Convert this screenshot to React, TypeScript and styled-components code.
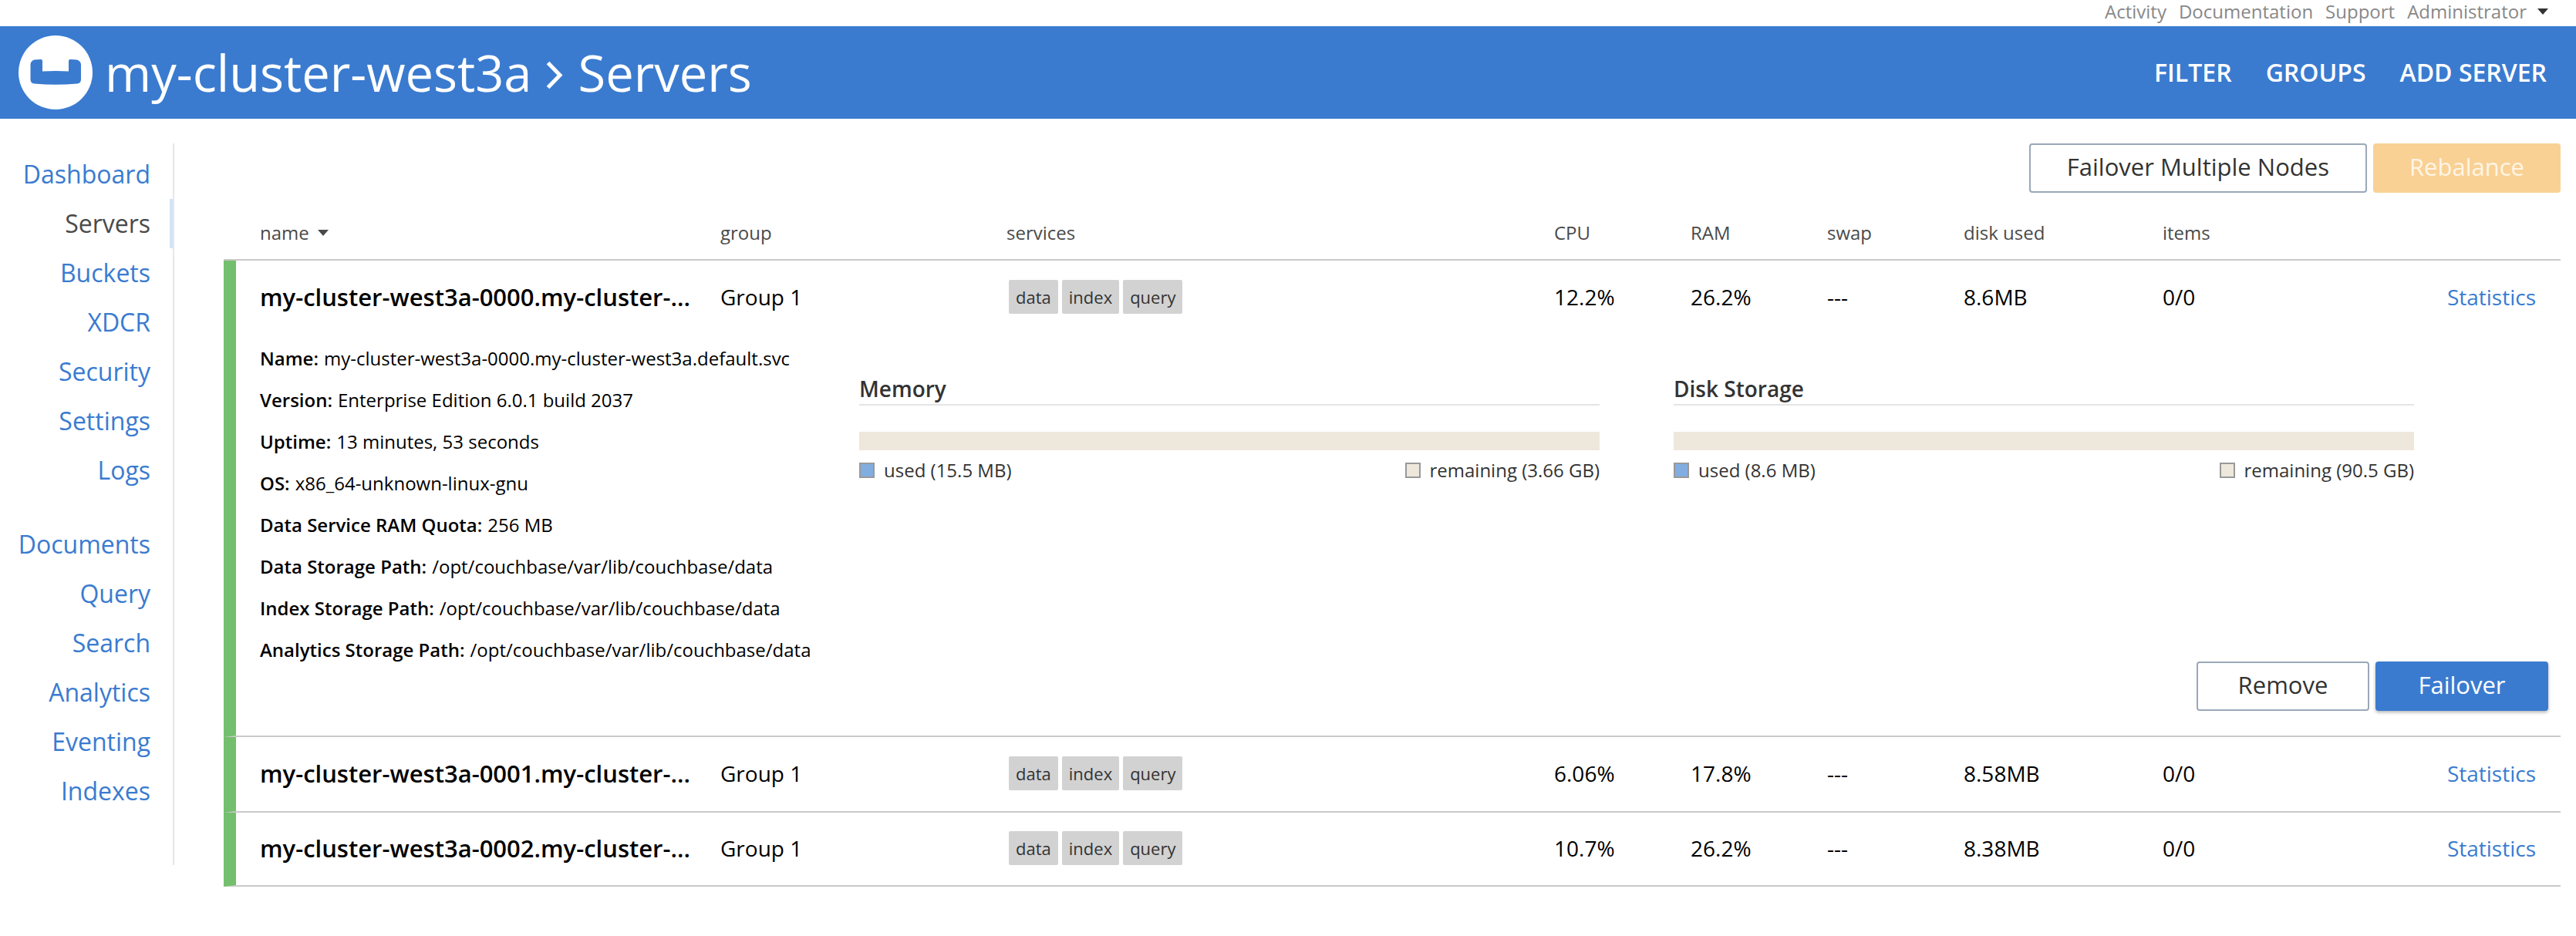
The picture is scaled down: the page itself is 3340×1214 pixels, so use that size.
import React from 'react';
import styled, { createGlobalStyle } from 'styled-components';

const blue = '#3a7bd0';

const GlobalStyle = createGlobalStyle`
  *, *::before, *::after { box-sizing: border-box; }
  body {
    margin: 0;
    background: #fff;
    color: #000;
    font-family: 'Open Sans', 'Noto Sans', sans-serif;
    font-size: 28px;
  }
  a { text-decoration: none; }
`;

const TopBar = styled.nav`
  display: flex;
  justify-content: flex-end;
  align-items: center;
  gap: 16px;
  height: 34px;
  padding: 0 36px 4px 0;
`;

const TopLink = styled.a`
  color: #888;
  font-size: 24px;
  line-height: 30px;
`;

const AccountButton = styled.button`
  display: flex;
  align-items: center;
  gap: 14px;
  padding: 0;
  border: 0;
  background: none;
  color: #888;
  font: inherit;
  font-size: 24px;
  line-height: 30px;
`;

const Caret = styled.span<{ $color: string }>`
  width: 0;
  height: 0;
  border: 7px solid transparent;
  border-top: 8px solid ${(p) => p.$color};
  border-bottom: 0;
`;

const Header = styled.header`
  display: flex;
  align-items: center;
  height: 120px;
  padding: 0 38px 0 24px;
  background: ${blue};
  color: #fff;
`;

const Logo = styled.svg`
  width: 96px;
  height: 96px;
  flex: none;
`;

const Title = styled.h1`
  display: flex;
  align-items: center;
  gap: 18px;
  margin: 0 auto 0 16px;
  font-size: 65px;
  font-weight: 400;
  line-height: 88px;
`;

const Chevron = styled.svg`
  width: 24px;
  height: 48px;
`;

const Actions = styled.div`
  display: flex;
  gap: 44px;
`;

const Action = styled.button`
  padding: 0;
  border: 0;
  background: none;
  color: #fff;
  font: inherit;
  font-size: 32px;
  font-weight: 600;
  line-height: 40px;
  text-transform: uppercase;
`;

const Body = styled.div`
  display: flex;
  align-items: flex-start;
  padding: 32px 20px 0 0;
`;

const Sidebar = styled.nav`
  display: flex;
  flex-direction: column;
  flex: none;
  gap: 32px;
  width: 226px;
  margin-right: 64px;
  padding: 8px 0 64px;
  border-right: 2px solid #e6e6e6;
`;

const NavGroup = styled.ul`
  margin: 0;
  padding: 0;
  list-style: none;
`;

const NavLink = styled.a<{ $active?: boolean }>`
  display: block;
  padding-right: ${(p) => (p.$active ? 25 : 29)}px;
  border-right: ${(p) => (p.$active ? '4px solid #d3e3f7' : '0')};
  color: ${(p) => (p.$active ? '#4a4a4a' : blue)};
  font-size: 32px;
  line-height: 64px;
  text-align: right;
`;

const Main = styled.main`
  flex: 1;
  min-width: 0;
`;

const ButtonRow = styled.div`
  display: flex;
  justify-content: flex-end;
  gap: 8px;
`;

const Button = styled.button<{ $kind: 'outline' | 'primary' | 'warning' }>`
  min-width: 224px;
  height: 64px;
  padding: 0 47px 4px;
  border: ${(p) => (p.$kind === 'outline' ? '2px solid #9aa8b8' : '0')};
  border-radius: 4px;
  background: ${(p) => ({ outline: '#fff', primary: blue, warning: '#f9d194' })[p.$kind]};
  box-shadow: ${(p) => (p.$kind === 'primary' ? '0 2px 4px rgba(0, 0, 0, 0.3)' : 'none')};
  color: ${(p) => ({ outline: '#333', primary: '#fff', warning: '#fff5e6' })[p.$kind]};
  font: inherit;
  font-size: 31px;
  line-height: 40px;
`;

const Table = styled.table`
  width: 100%;
  table-layout: fixed;
  border-collapse: separate;
  border-spacing: 0;
`;

const Col = styled.col<{ $width?: number }>`
  width: ${(p) => (p.$width ? `${p.$width}px` : 'auto')};
`;

const HeadCell = styled.th`
  height: 88px;
  padding: 17px 0 0;
  border-bottom: 2px solid #c9c9c9;
  color: #4a4a4a;
  font-size: 24px;
  font-weight: 400;
  line-height: 32px;
  text-align: left;

  &:first-child { padding-left: 47px; }
`;

const SortButton = styled.button`
  display: flex;
  align-items: center;
  gap: 11px;
  padding: 0;
  border: 0;
  background: none;
  color: inherit;
  font: inherit;
`;

const Cell = styled.td<{ $open?: boolean }>`
  height: ${(p) => (p.$open ? 96 : 98)}px;
  padding: 0 0 2px;
  border-bottom: ${(p) => (p.$open ? '0' : '2px solid #c9c9c9')};
  line-height: 40px;
  vertical-align: middle;

  tr:last-child > & { height: 96px; }
`;

const NameCell = styled(Cell)`
  padding-left: 31px;
  border-left: 16px solid #74bf6d;
  font-size: 31px;
  font-weight: 600;
  white-space: nowrap;
`;

const LinkCell = styled(Cell)`
  padding-right: 32px;
  text-align: right;
`;

const StatsLink = styled.a`
  color: ${blue};
`;

const Tags = styled.div`
  display: flex;
  gap: 5px;
  padding-left: 3px;
`;

const Tag = styled.span`
  padding: 0 9px;
  border-radius: 2px;
  background: #d2d2d2;
  color: #333;
  font-size: 22px;
  line-height: 44px;
`;

const DetailCell = styled.td`
  padding: 4px 16px 32px 31px;
  border-left: 16px solid #74bf6d;
  border-bottom: 2px solid #c9c9c9;
`;

const DetailTop = styled.div`
  display: grid;
  grid-template-columns: 681px 1fr 1fr;
  column-gap: 96px;
  padding-right: 174px;
`;

const Facts = styled.dl`
  margin: 0;
  font-size: 24px;
  line-height: 54px;
  white-space: nowrap;
`;

const Fact = styled.div`
  display: flex;
  gap: 7px;

  dt { font-weight: 600; }
  dd { margin: 0; }
`;

const Usage = styled.section`
  padding-top: 47px;
`;

const UsageTitle = styled.h2`
  margin: 0 0 34px;
  padding-bottom: 1px;
  border-bottom: 2px solid #e4e4e4;
  color: #333;
  font-size: 28px;
  font-weight: 600;
  line-height: 38px;
`;

const Bar = styled.div`
  height: 24px;
  background: #eee7dc;
`;

const Legend = styled.div`
  display: flex;
  justify-content: space-between;
  padding-top: 9px;
  color: #333;
  font-size: 24px;
  line-height: 34px;
`;

const LegendItem = styled.span`
  display: flex;
  align-items: center;
  gap: 12px;
`;

const Swatch = styled.span<{ $color: string }>`
  width: 20px;
  height: 20px;
  border: 2px solid #999;
  background: ${(p) => p.$color};
`;

const DetailButtons = styled(ButtonRow)`
  margin-top: -12px;
`;

const navGroups = [
  ['Dashboard', 'Servers', 'Buckets', 'XDCR', 'Security', 'Settings', 'Logs'],
  ['Documents', 'Query', 'Search', 'Analytics', 'Eventing', 'Indexes'],
];

const columns = [
  { label: 'name', width: 644 },
  { label: 'group', width: 371 },
  { label: 'services' },
  { label: 'CPU', width: 177 },
  { label: 'RAM', width: 177 },
  { label: 'swap', width: 177 },
  { label: 'disk used', width: 258 },
  { label: 'items', width: 276 },
  { label: '', width: 240 },
];

const servers = [
  { id: '0000', cpu: '12.2%', ram: '26.2%', disk: '8.6MB', open: true },
  { id: '0001', cpu: '6.06%', ram: '17.8%', disk: '8.58MB', open: false },
  { id: '0002', cpu: '10.7%', ram: '26.2%', disk: '8.38MB', open: false },
];

const facts = [
  ['Name:', 'my-cluster-west3a-0000.my-cluster-west3a.default.svc'],
  ['Version:', 'Enterprise Edition 6.0.1 build 2037'],
  ['Uptime:', '13 minutes, 53 seconds'],
  ['OS:', 'x86_64-unknown-linux-gnu'],
  ['Data Service RAM Quota:', '256 MB'],
  ['Data Storage Path:', '/opt/couchbase/var/lib/couchbase/data'],
  ['Index Storage Path:', '/opt/couchbase/var/lib/couchbase/data'],
  ['Analytics Storage Path:', '/opt/couchbase/var/lib/couchbase/data'],
];

function UsagePanel({ title, used, remaining }: { title: string; used: string; remaining: string }) {
  return (
    <Usage>
      <UsageTitle>{title}</UsageTitle>
      <Bar />
      <Legend>
        <LegendItem><Swatch $color="#82ade0" />used ({used})</LegendItem>
        <LegendItem><Swatch $color="#eee7dc" />remaining ({remaining})</LegendItem>
      </Legend>
    </Usage>
  );
}

export default function App() {
  return (
    <>
      <GlobalStyle />
      <TopBar>
        <TopLink href="#activity">Activity</TopLink>
        <TopLink href="#documentation">Documentation</TopLink>
        <TopLink href="#support">Support</TopLink>
        <AccountButton type="button">Administrator<Caret $color="#333" /></AccountButton>
      </TopBar>
      <Header>
        <Logo viewBox="0 0 96 96" aria-hidden="true">
          <circle cx="48" cy="48" r="48" fill="#fff" />
          <path
            fill={blue}
            d="M20.500 31.500Q24 31 29 31Q31 31 31 33V46.500Q48 45.500 65 46.500V33Q65 31 67 31Q72 31 75.500 31.500Q81 33 81 38V57Q81 62 76 62.500Q48 65 20.500 62.500Q15.500 62 15.500 57V38Q15.500 33 20.500 31.500Z"
          />
        </Logo>
        <Title>
          my-cluster-west3a
          <Chevron viewBox="0 0 24 48" aria-hidden="true">
            <path d="M3.500 11.500L19 27.500L3.500 43.500" fill="none" stroke="#fff" strokeWidth="5" />
          </Chevron>
          Servers
        </Title>
        <Actions>
          <Action type="button">Filter</Action>
          <Action type="button">Groups</Action>
          <Action type="button">Add Server</Action>
        </Actions>
      </Header>
      <Body>
        <Sidebar>
          {navGroups.map((group) => (
            <NavGroup key={group[0]}>
              {group.map((item) => (
                <li key={item}>
                  <NavLink href={`#${item.toLowerCase()}`} $active={item === 'Servers'}>{item}</NavLink>
                </li>
              ))}
            </NavGroup>
          ))}
        </Sidebar>
        <Main>
          <ButtonRow>
            <Button type="button" $kind="outline">Failover Multiple Nodes</Button>
            <Button type="button" $kind="warning" disabled>Rebalance</Button>
          </ButtonRow>
          <Table>
            <colgroup>
              {columns.map((c) => <Col key={c.label} $width={c.width} />)}
            </colgroup>
            <thead>
              <tr>
                {columns.map((c) => (
                  <HeadCell key={c.label} scope="col">
                    {c.label === 'name' ? <SortButton type="button">name<Caret $color="#4a4a4a" /></SortButton> : c.label}
                  </HeadCell>
                ))}
              </tr>
            </thead>
            <tbody>
              {servers.map((s) => (
                <React.Fragment key={s.id}>
                  <tr>
                    <NameCell $open={s.open}>my-cluster-west3a-{s.id}.my-cluster-...</NameCell>
                    <Cell $open={s.open}>Group 1</Cell>
                    <Cell $open={s.open}>
                      <Tags>
                        <Tag>data</Tag>
                        <Tag>index</Tag>
                        <Tag>query</Tag>
                      </Tags>
                    </Cell>
                    <Cell $open={s.open}>{s.cpu}</Cell>
                    <Cell $open={s.open}>{s.ram}</Cell>
                    <Cell $open={s.open}>---</Cell>
                    <Cell $open={s.open}>{s.disk}</Cell>
                    <Cell $open={s.open}>0/0</Cell>
                    <LinkCell $open={s.open}><StatsLink href="#statistics">Statistics</StatsLink></LinkCell>
                  </tr>
                  {s.open && (
                    <tr>
                      <DetailCell colSpan={9}>
                        <DetailTop>
                          <Facts>
                            {facts.map(([label, value]) => (
                              <Fact key={label}><dt>{label}</dt><dd>{value}</dd></Fact>
                            ))}
                          </Facts>
                          <UsagePanel title="Memory" used="15.5 MB" remaining="3.66 GB" />
                          <UsagePanel title="Disk Storage" used="8.6 MB" remaining="90.5 GB" />
                        </DetailTop>
                        <DetailButtons>
                          <Button type="button" $kind="outline">Remove</Button>
                          <Button type="button" $kind="primary">Failover</Button>
                        </DetailButtons>
                      </DetailCell>
                    </tr>
                  )}
                </React.Fragment>
              ))}
            </tbody>
          </Table>
        </Main>
      </Body>
    </>
  );
}
